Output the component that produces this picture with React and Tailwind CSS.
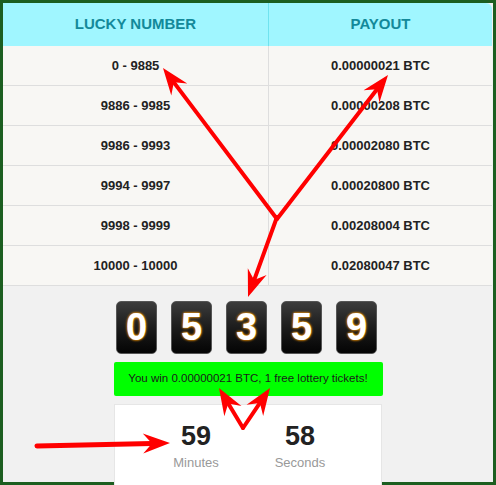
import React from 'react';

const rows = [
  ['0 - 9885', '0.00000021 BTC'],
  ['9886 - 9985', '0.00000208 BTC'],
  ['9986 - 9993', '0.00002080 BTC'],
  ['9994 - 9997', '0.00020800 BTC'],
  ['9998 - 9999', '0.00208004 BTC'],
  ['10000 - 10000', '0.02080047 BTC'],
];

const digits = ['0', '5', '3', '5', '9'];

// red annotation arrow with a notched head
function Arrow({ x1, y1, x2, y2, w = 4 }) {
  const dx = x2 - x1;
  const dy = y2 - y1;
  const len = Math.hypot(dx, dy);
  const ux = dx / len;
  const uy = dy / len;
  const px = -uy;
  const py = ux;
  const hl = 27;
  const hw = 10;
  const bx = x2 - ux * hl;
  const by = y2 - uy * hl;
  const nx = x2 - ux * (hl - 9);
  const ny = y2 - uy * (hl - 9);
  const pts = [
    [x2, y2],
    [bx + px * hw, by + py * hw],
    [nx, ny],
    [bx - px * hw, by - py * hw],
  ]
    .map((p) => p.join(','))
    .join(' ');
  return (
    <g>
      <line x1={x1} y1={y1} x2={nx} y2={ny} stroke="#ff0000" strokeWidth={w} strokeLinecap="round" />
      <polygon points={pts} fill="#ff0000" />
    </g>
  );
}

export default function App() {
  return (
    <div className="relative w-[496px] h-[485px] overflow-hidden font-['Liberation_Sans',Arial,sans-serif]">
      <div className="w-full h-full border-[3px] border-[#1c5e20] bg-[#f1f1f1]">
        <div className="mr-[1px] rounded-tr-md overflow-hidden">
          <div className="grid grid-cols-[266px_1fr] h-[43px] bg-[#a0f6ff] text-[#13899a] text-[15px] font-bold">
            <div className="flex items-center justify-center border-r border-[#6fe3ef]">LUCKY NUMBER</div>
            <div className="flex items-center justify-center">PAYOUT</div>
          </div>
          {rows.map(([n, p]) => (
            <div key={n} className="grid grid-cols-[266px_1fr] h-[40px] bg-[#f8f7f4] border-b border-[#dedede] text-[13px] font-bold text-[#222]">
              <div className="flex items-center justify-center border-r border-[#dedede]">{n}</div>
              <div className="flex items-center justify-center">{p}</div>
            </div>
          ))}
        </div>

        <div className="flex flex-col items-center">
          <div className="mt-[15px] mr-[3px] flex gap-[14px]">
            {digits.map((d, i) => (
              <div
                key={i}
                className="w-[41px] h-[53px] rounded-[5px] border border-[#555] bg-gradient-to-b from-[#3c3c3c] via-[#1c1c1c] to-[#050505] flex items-center justify-center text-white text-[38px] font-bold [text-shadow:0_0_3px_#ff9900,0_0_2px_#ff9900]"
              >
                {d}
              </div>
            ))}
          </div>

          <div className="mt-[8px] w-[269px] h-[34px] rounded-[2px] bg-[#00ff00] flex items-center justify-center text-[11.5px] text-[#1a1a1a]">
            You win 0.00000021 BTC, 1 free lottery tickets!
          </div>

          <div className="mt-[8px] w-[268px] h-[90px] bg-white border border-[#e6e6e6] flex justify-center pt-[15px]">
            <div className="w-[104px] flex flex-col items-center">
              <div className="text-[27px] leading-[32px] font-bold text-[#222]">59</div>
              <div className="text-[13px] text-[#999] mt-[1px]">Minutes</div>
            </div>
            <div className="w-[104px] flex flex-col items-center">
              <div className="text-[27px] leading-[32px] font-bold text-[#222]">58</div>
              <div className="text-[13px] text-[#999] mt-[1px]">Seconds</div>
            </div>
          </div>
        </div>
      </div>

      <svg className="absolute top-0 left-0 pointer-events-none" width="496" height="485" viewBox="0 0 496 485">
        <Arrow x1={277} y1={219} x2={163} y2={68} />
        <Arrow x1={277} y1={219} x2={388} y2={75} />
        <Arrow x1={277} y1={217} x2={248} y2={297} />
        <Arrow x1={243} y1={428} x2={219} y2={388} />
        <Arrow x1={243} y1={428} x2={270} y2={388} />
        <Arrow x1={37} y1={446} x2={170} y2={443} w={5} />
      </svg>
    </div>
  );
}
